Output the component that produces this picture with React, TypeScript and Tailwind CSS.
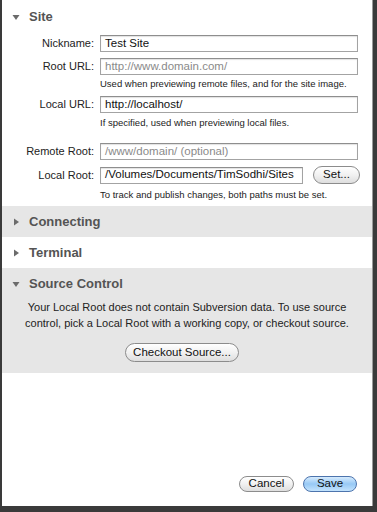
import React from "react";

const font = { fontFamily: '"Liberation Sans", Arial, sans-serif' };

function Tri({ open }: { open: boolean }) {
  return (
    <svg width="8" height="8" viewBox="0 0 8 8" className="shrink-0">
      {open ? <path d="M0.5 2 L7.5 2 L4 7 Z" fill="#6b6b6b" /> : <path d="M2 0.5 L7 4 L2 7.5 Z" fill="#6b6b6b" />}
    </svg>
  );
}

function Header({ title, open }: { title: string; open: boolean }) {
  return (
    <div className="flex items-center h-[31px] pl-[10px] gap-[9px]">
      <Tri open={open} />
      <span className="text-[13px] font-bold text-[#545454] leading-[16px]">{title}</span>
    </div>
  );
}

function Field({ label, value, placeholder, width }: { label: string; value?: string; placeholder?: string; width?: string }) {
  return (
    <div className="flex items-center">
      <div className="w-[96px] pr-[4px] text-right text-[11px] text-[#222]">{label}</div>
      <div
        className={`h-[17px] ml-[2px] border border-[#a3a3a3] border-t-[#8e8e8e] bg-white shadow-[inset_0_1px_1px_rgba(0,0,0,0.12)] flex items-center pl-[4px] text-[11.5px] whitespace-nowrap overflow-hidden ${width ?? "w-[258px]"}`}
      >
        {value ? <span className="text-[#111]">{value}</span> : <span className="text-[#8a8a8a]">{placeholder}</span>}
      </div>
    </div>
  );
}

function Help({ children, mt }: { children: React.ReactNode; mt: string }) {
  return <div className={`pl-[98px] text-[9.5px] leading-[12px] text-[#222] ${mt}`}>{children}</div>;
}

function AquaButton({ children, className, blue }: { children: React.ReactNode; className: string; blue?: boolean }) {
  return (
    <button
      className={`rounded-full border text-[11.5px] leading-none flex items-center justify-center ${
        blue
          ? "border-[#4d74ad] bg-linear-to-b from-[#d6ebfd] via-[#97c9f5] to-[#c3e3fd] text-[#111]"
          : "border-[#8c8c8c] bg-linear-to-b from-white via-[#f1f1f1] to-[#dedede] text-[#111]"
      } ${className}`}
    >
      {children}
    </button>
  );
}

export default function App() {
  return (
    <div style={font} className="w-[377px] h-[512px] bg-[#3a3a3a] overflow-hidden">
      <div className="ml-[2px] w-[371px] h-[506px] bg-white border-r border-[#9a9a9a] flex flex-col">
        <div className="pt-[1px]">
          <Header title="Site" open />
        </div>
        <div className="mt-[3px]">
          <Field label="Nickname:" value="Test Site" />
          <div className="mt-[6px]">
            <Field label="Root URL:" placeholder="http://www.domain.com/" />
          </div>
          <Help mt="mt-[3px]">Used when previewing remote files, and for the site image.</Help>
          <div className="mt-[6px]">
            <Field label="Local URL:" value="http://localhost/" />
          </div>
          <Help mt="mt-[4px]">If specified, used when previewing local files.</Help>
          <div className="mt-[14px]">
            <Field label="Remote Root:" placeholder="/www/domain/ (optional)" />
          </div>
          <div className="mt-[6px] flex items-center">
            <Field label="Local Root:" value="/Volumes/Documents/TimSodhi/Sites" width="w-[203px]" />
            <AquaButton className="ml-[10px] w-[47px] h-[18px]">Set...</AquaButton>
          </div>
          <Help mt="mt-[5px]">To track and publish changes, both paths must be set.</Help>
        </div>
        <div className="mt-[5px] bg-[#e6e6e6]">
          <Header title="Connecting" open={false} />
        </div>
        <div>
          <Header title="Terminal" open={false} />
        </div>
        <div className="bg-[#e6e6e6] pb-[11px]">
          <Header title="Source Control" open />
          <p className="text-center text-[11px] leading-[16px] text-[#222]">
            Your Local Root does not contain Subversion data. To use source
            <br />
            control, pick a Local Root with a working copy, or checkout source.
          </p>
          <div className="mt-[12px] flex pl-[123px]">
            <AquaButton className="w-[114px] h-[19px]">Checkout Source...</AquaButton>
          </div>
        </div>
        <div className="flex-1" />
        <div className="flex justify-end gap-[9px] pr-[15px] pb-[14px]">
          <AquaButton className="w-[55px] h-[16px]">Cancel</AquaButton>
          <AquaButton blue className="w-[54px] h-[16px]">Save</AquaButton>
        </div>
      </div>
    </div>
  );
}
